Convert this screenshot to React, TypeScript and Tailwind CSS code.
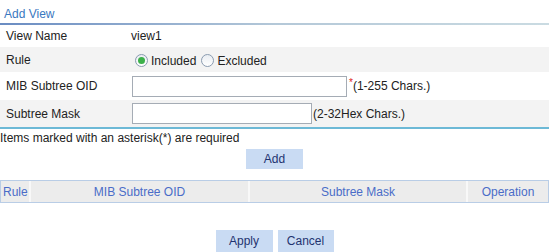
import { useState } from 'react';

const Radio = ({ checked, onClick, label }: { checked: boolean; onClick: () => void; label: string }) => (
  <label className="flex items-center cursor-pointer" onClick={onClick}>
    <span className="w-[13px] h-[13px] rounded-full border border-[#8a9bb0] bg-gradient-to-b from-[#e9edf2] to-white flex items-center justify-center">
      {checked && <span className="w-[7px] h-[7px] rounded-full bg-[#3cb04a]" />}
    </span>
    <span className="ml-[3px]">{label}</span>
  </label>
);

const App = () => {
  const [rule, setRule] = useState<'included' | 'excluded'>('included');

  return (
    <div className="w-[549px] h-[252px] bg-white overflow-hidden text-[12px] leading-[14px] text-[#222] font-['Liberation_Sans',Arial,sans-serif]">
      <div className="h-[23px] pl-[4px] pt-[7px] text-[#3a78c0]">Add View</div>
      <div className="h-[2px] bg-gradient-to-r from-[#6a8cc2] via-[#b4c8d8] to-[#cadbe2]" />

      <div className="grid grid-cols-[131px_1fr]">
        <div className="h-[22px] pl-[6px] flex items-center">View Name</div>
        <div className="h-[22px] flex items-center">view1</div>

        <div className="h-[25px] pl-[6px] flex items-center bg-[#f3f3f3]">Rule</div>
        <div className="h-[25px] pl-[4px] flex items-center gap-[5px] bg-[#f3f3f3] pt-[2px]">
          <Radio checked={rule === 'included'} onClick={() => setRule('included')} label="Included" />
          <Radio checked={rule === 'excluded'} onClick={() => setRule('excluded')} label="Excluded" />
        </div>

        <div className="h-[28px] pl-[6px] flex items-center">MIB Subtree OID</div>
        <div className="h-[28px] flex items-center pl-[1px]">
          <input className="w-[215px] h-[21px] border border-[#a5acb5] bg-white outline-none px-1" />
          <span className="text-[#e02020] ml-[2px] self-start mt-[6px] text-[10px] leading-[10px]">*</span>
          <span>(1-255 Chars.)</span>
        </div>

        <div className="h-[27px] pl-[6px] flex items-center bg-[#f3f3f3]">Subtree Mask</div>
        <div className="h-[27px] flex items-center pl-[1px] bg-[#f3f3f3]">
          <input className="w-[180px] h-[21px] border border-[#a5acb5] bg-white outline-none px-1" />
          <span className="ml-[1px]">(2-32Hex Chars.)</span>
        </div>
      </div>
      <div className="h-[2px] bg-[#6db9d6]" />

      <div className="h-[17px] flex items-center">Items marked with an asterisk(*) are required</div>

      <div className="flex justify-center pt-[3px]">
        <button className="w-[57px] h-[20px] bg-[#c9dbf3] text-[#1f3370]">Add</button>
      </div>

      <div className="mt-[11px] h-[23px] border border-[#b9cde6] bg-[#ececec] flex text-[#4a6cc8] w-[549px]">
        <div className="w-[30px] pl-[2px] flex items-center border-r-2 border-[#f8f8f8]">Rule</div>
        <div className="w-[219px] flex items-center justify-center border-r-2 border-[#f8f8f8]">MIB Subtree OID</div>
        <div className="w-[218px] flex items-center justify-center border-r-2 border-[#f8f8f8]">Subtree Mask</div>
        <div className="flex-1 flex items-center justify-center">Operation</div>
      </div>

      <div className="flex justify-center gap-[5px] mt-[27px]">
        <button className="w-[57px] h-[22px] bg-[#c9dbf3] text-[#1f3370]">Apply</button>
        <button className="w-[56px] h-[22px] bg-[#c9dbf3] text-[#1f3370]">Cancel</button>
      </div>
    </div>
  );
};

export default App;
